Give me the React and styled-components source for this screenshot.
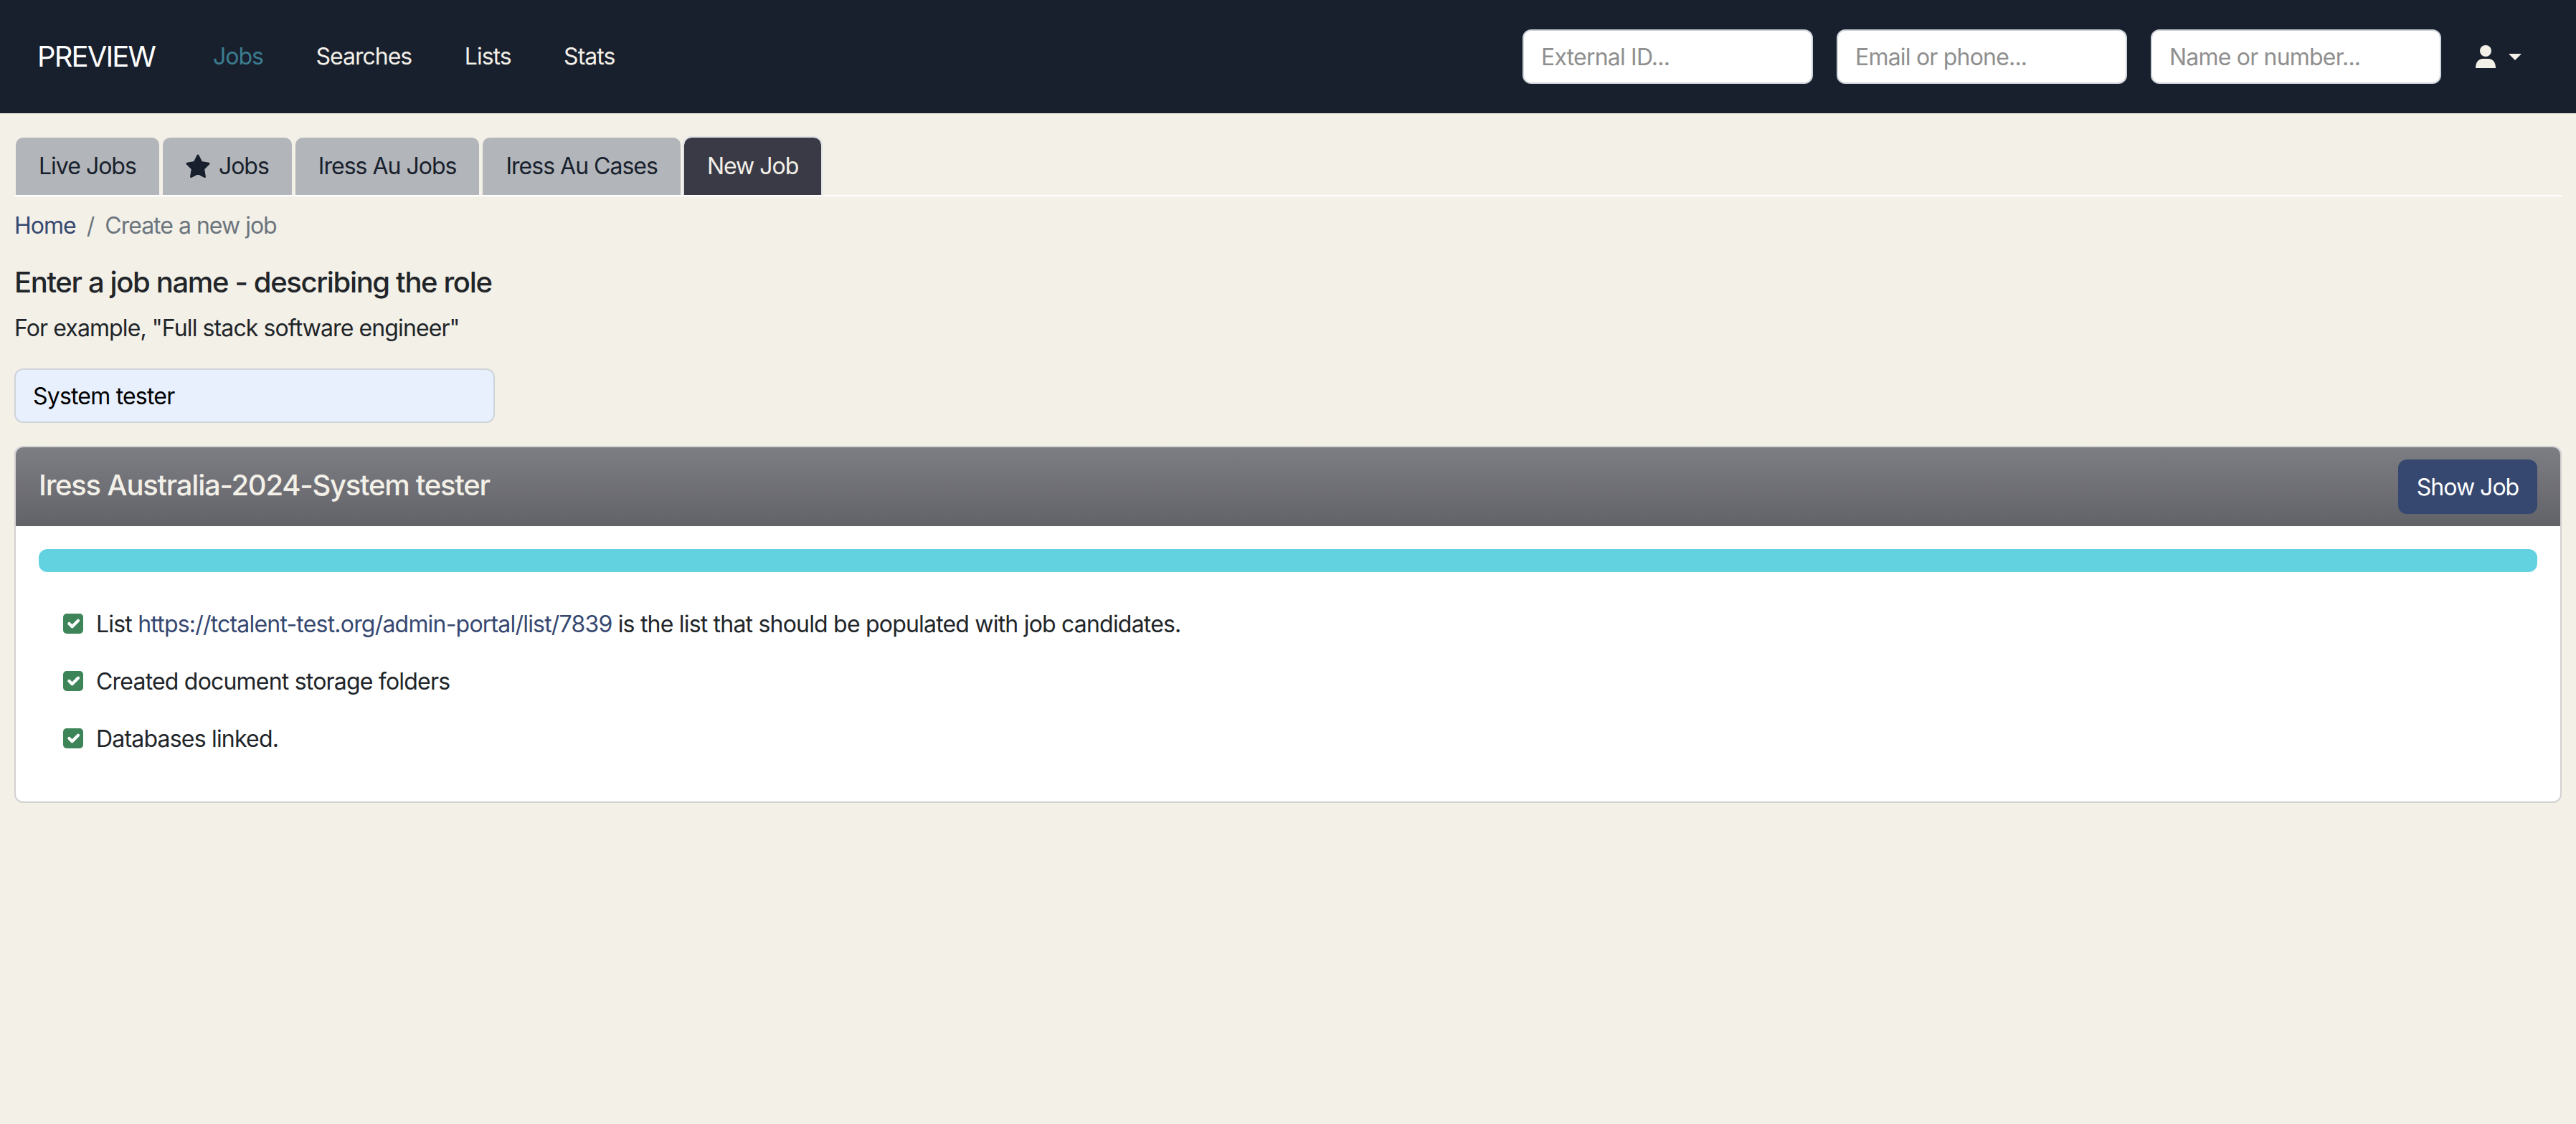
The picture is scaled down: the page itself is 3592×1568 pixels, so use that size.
import React from 'react';
import styled, { createGlobalStyle } from 'styled-components';

const GlobalStyle = createGlobalStyle`
	html, body {
		margin: 0;
		padding: 0;
		background: #f3f0e8;
	}
	body {
		font-family: Inter, "Noto Sans", sans-serif;
		font-size: 32px;
		line-height: 48px;
		letter-spacing: -0.025em;
		color: #212529;
	}
	* {
		box-sizing: border-box;
	}
`;

const Navbar = styled.nav`
	display: flex;
	align-items: center;
	height: 158px;
	padding: 0 76px 0 52px;
	background: #181f2d;
`;

const Brand = styled.a`
	font-size: 40px;
	line-height: 60px;
	letter-spacing: -0.047em;
	color: #ffffff;
	margin-right: 81px;
`;

const NavLinks = styled.div`
	display: flex;
	gap: 73.5px;
	flex: 1;
	letter-spacing: -0.031em;
`;

const NavLink = styled.a`
	color: ${props => (props.$active ? '#3b7d8f' : '#f3f0e8')};
`;

const SearchForm = styled.form`
	display: flex;
	gap: 33px;
	margin: 0;
`;

const SearchInput = styled.input`
	width: 405px;
	height: 76px;
	padding: 0 24px;
	border: 2px solid #ced4da;
	border-radius: 12px;
	background: #ffffff;
	font-family: inherit;
	font-size: 32px;
	letter-spacing: inherit;
	color: #212529;
	&::placeholder {
		color: #8f8f8f;
		opacity: 1;
	}
`;

const UserMenu = styled.div`
	display: flex;
	align-items: center;
	gap: 18px;
	margin-left: 48px;
	svg {
		width: 28px;
		height: 32px;
		display: block;
	}
`;

const Caret = styled.span`
	width: 0;
	height: 0;
	border-top: 9px solid #f3f0e8;
	border-left: 9px solid transparent;
	border-right: 9px solid transparent;
`;

const Main = styled.main`
	padding: 32px 20px 0;
`;

const Tabs = styled.div`
	display: flex;
	gap: 1px;
	border-bottom: 2px solid #ffffff;
	height: 84px;
	letter-spacing: -0.031em;
`;

const Tab = styled.a`
	display: flex;
	align-items: center;
	gap: 12px;
	height: 84px;
	padding: 16px 32px;
	border: 2px solid ${props => (props.$active ? '#dee2e6' : 'transparent')};
	border-bottom-color: ${props => (props.$active ? '#ffffff' : 'transparent')};
	border-radius: 12px 12px 0 0;
	background: ${props => (props.$active ? '#393a46' : '#b2b5b9')};
	background-clip: padding-box;
	color: ${props => (props.$active ? '#f3f0e8' : '#181f2d')};
	svg {
		width: 34px;
		height: 34px;
		display: block;
	}
`;

const Breadcrumb = styled.div`
	display: flex;
	margin-top: 17px;
	letter-spacing: -0.031em;
	color: #6c757d;
`;

const Crumb = styled.a`
	color: #364870;
`;

const Divider = styled.span`
	padding: 0 15px;
	color: #6c757d;
`;

const Heading = styled.h5`
	margin: 31px 0 0;
	font-size: 40px;
	line-height: 48px;
	font-weight: 500;
	letter-spacing: -0.034em;
`;

const Hint = styled.p`
	margin: 16px 0 0;
	letter-spacing: -0.028em;
`;

const JobInput = styled.input`
	display: block;
	width: 670px;
	height: 76px;
	margin-top: 32px;
	padding: 0 24px;
	border: 2px solid #ced4da;
	border-radius: 12px;
	background: #e8f0fe;
	font-family: inherit;
	font-size: 32px;
	letter-spacing: inherit;
	color: #000000;
`;

const Card = styled.section`
	margin-top: 32px;
	border: 2px solid #d2d2d2;
	border-radius: 12px;
	background: #ffffff;
	overflow: hidden;
`;

const CardHeader = styled.header`
	display: flex;
	align-items: center;
	justify-content: space-between;
	height: 110px;
	padding: 0 32px;
	background: linear-gradient(180deg, #7d7e83, #626269);
`;

const CardTitle = styled.h5`
	margin: 0 0 4px;
	font-size: 40px;
	line-height: 48px;
	font-weight: 500;
	letter-spacing: -0.0315em;
	color: #f3f0e8;
`;

const ShowButton = styled.button`
	width: 194px;
	height: 76px;
	border: 0;
	border-radius: 12px;
	background: #364870;
	font-family: inherit;
	font-size: 32px;
	letter-spacing: -0.031em;
	color: #ffffff;
`;

const CardBody = styled.div`
	padding: 32px 32px 48px;
`;

const Progress = styled.div`
	height: 32px;
	border-radius: 12px;
	background: #62d2e1;
`;

const Steps = styled.ul`
	list-style: none;
	margin: 32px 0 0;
	padding: 0 0 0 34px;
`;

const Step = styled.li`
	display: flex;
	align-items: center;
	gap: 18px;
	height: 80px;
`;

const StepText = styled.span`
	position: relative;
	top: 1px;
`;

const Check = styled.span`
	flex: none;
	width: 28px;
	height: 28px;
	border-radius: 5px;
	background: #3d8558;
	svg {
		display: block;
		width: 28px;
		height: 28px;
	}
`;

const StepLink = styled.a`
	color: #364870;
`;

const StepCheck = () => (
	<Check>
		<svg viewBox="0 0 20 20">
			<path fill="none" stroke="#ffffff" strokeLinecap="round" strokeLinejoin="round" strokeWidth="3" d="m6 10 3 3 6-6" />
		</svg>
	</Check>
);

const UserIcon = () => (
	<svg viewBox="0 0 28 32" fill="#f3f0e8">
		<circle cx="14" cy="8" r="8" />
		<path d="M0 32c0-8 4-13 10-13h8c6 0 10 5 10 13z" />
	</svg>
);

const StarIcon = () => (
	<svg viewBox="0 0 34 34" fill="#181f2d" stroke="#181f2d" strokeWidth="3" strokeLinejoin="round">
		<polygon points="17,2 21.8,11.6 32,13.2 24.6,20.6 26.4,31.5 17,26.4 7.6,31.5 9.4,20.6 2,13.2 12.2,11.6" />
	</svg>
);

const App = () => (
	<>
		<GlobalStyle />
		<Navbar>
			<Brand>PREVIEW</Brand>
			<NavLinks>
				<NavLink $active>Jobs</NavLink>
				<NavLink>Searches</NavLink>
				<NavLink>Lists</NavLink>
				<NavLink>Stats</NavLink>
			</NavLinks>
			<SearchForm>
				<SearchInput placeholder="External ID..." />
				<SearchInput placeholder="Email or phone..." />
				<SearchInput placeholder="Name or number..." />
			</SearchForm>
			<UserMenu>
				<UserIcon />
				<Caret />
			</UserMenu>
		</Navbar>
		<Main>
			<Tabs>
				<Tab>Live Jobs</Tab>
				<Tab><StarIcon /> Jobs</Tab>
				<Tab>Iress Au Jobs</Tab>
				<Tab>Iress Au Cases</Tab>
				<Tab $active>New Job</Tab>
			</Tabs>
			<Breadcrumb>
				<Crumb>Home</Crumb>
				<Divider>/</Divider>
				<span>Create a new job</span>
			</Breadcrumb>
			<Heading>Enter a job name - describing the role</Heading>
			<Hint>For example, "Full stack software engineer"</Hint>
			<JobInput defaultValue="System tester" />
			<Card>
				<CardHeader>
					<CardTitle>Iress Australia-2024-System tester</CardTitle>
					<ShowButton>Show Job</ShowButton>
				</CardHeader>
				<CardBody>
					<Progress />
					<Steps>
						<Step>
							<StepCheck />
							<StepText>List <StepLink>https://tctalent-test.org/admin-portal/list/7839</StepLink> is the list that should be populated with job candidates.</StepText>
						</Step>
						<Step>
							<StepCheck />
							<StepText>Created document storage folders</StepText>
						</Step>
						<Step>
							<StepCheck />
							<StepText>Databases linked.</StepText>
						</Step>
					</Steps>
				</CardBody>
			</Card>
		</Main>
	</>
);

export default App;
